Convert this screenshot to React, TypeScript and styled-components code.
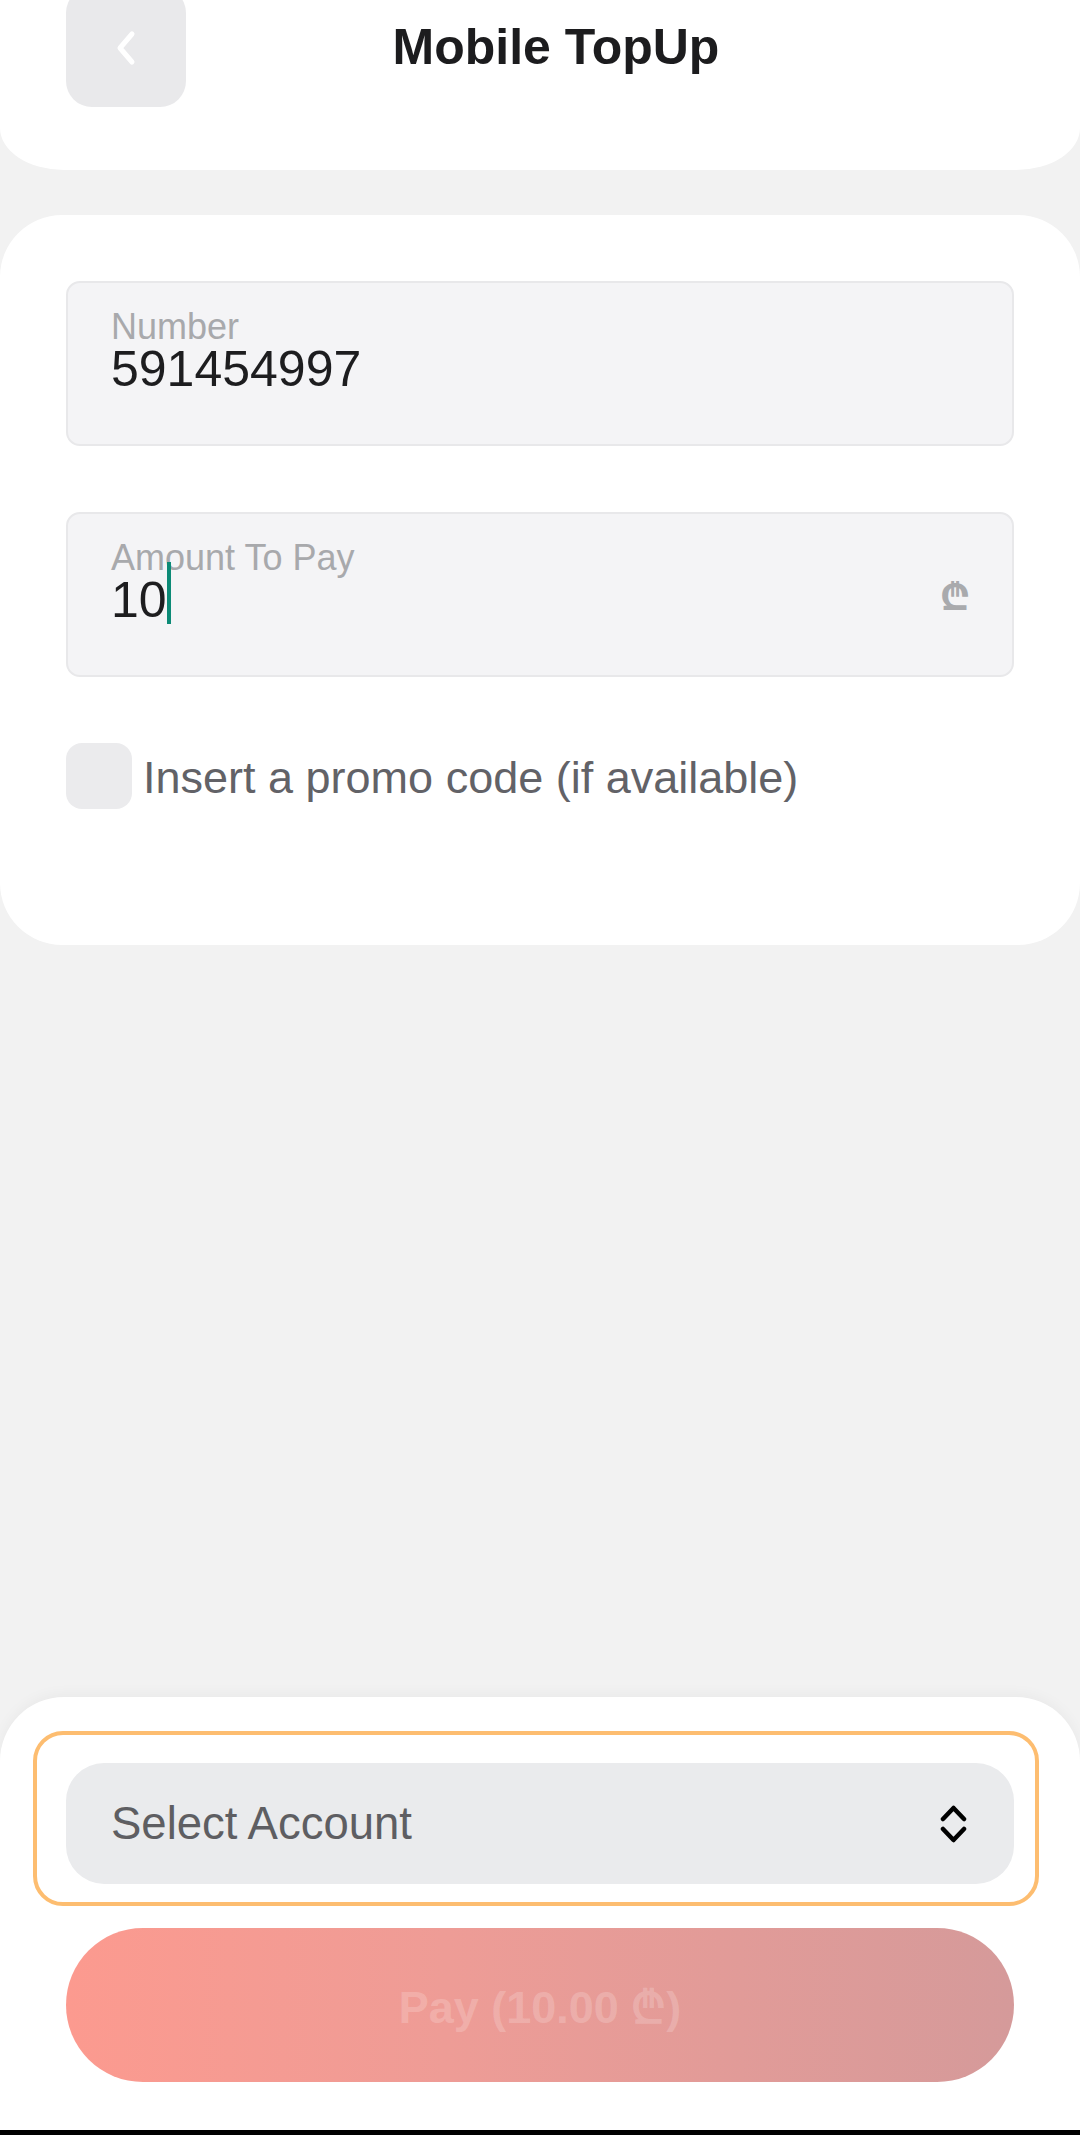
import React from "react";
import styled, { createGlobalStyle } from "styled-components";

const Global = createGlobalStyle`
  html, body {
    margin: 0;
    padding: 0;
    background: #f2f2f2;
    font-family: "Liberation Sans", Arial, sans-serif;
  }
  * { box-sizing: border-box; }
`;

const Page = styled.div`
  min-height: 100vh;
  display: flex;
  flex-direction: column;
  background: #f2f2f2;
`;

const Header = styled.header`
  height: 170px;
  background: #ffffff;
  border-radius: 0 0 64px 64px / 0 0 42px 42px;
  padding: 0 66px;
`;

const HeaderRow = styled.div`
  margin-top: -13px;
  height: 120px;
  display: grid;
  grid-template-columns: 120px 1fr 88px;
  align-items: center;
`;

const BackButton = styled.button`
  width: 120px;
  height: 120px;
  border: none;
  border-radius: 26px;
  background: #e9e9eb;
  display: flex;
  align-items: center;
  justify-content: center;
  padding: 0;
  padding-top: 2px;
`;

const Title = styled.h1`
  margin: 0;
  text-align: center;
  font-size: 50px;
  font-weight: 700;
  color: #1c1c1e;
`;

const Card = styled.section`
  margin-top: 45px;
  background: #ffffff;
  border-radius: 62px;
  padding: 66px 66px 136px;
  display: flex;
  flex-direction: column;
  gap: 66px;
`;

const Field = styled.div`
  position: relative;
  height: 165px;
  background: #f4f4f6;
  border: 2px solid #e8e8ea;
  border-radius: 14px;
  padding: 27px 42px 0 43px;
  display: flex;
  align-items: flex-start;
`;

const FieldBody = styled.div`
  flex: 1;
  display: flex;
  flex-direction: column;
`;

const Label = styled.span`
  font-size: 36px;
  line-height: 34px;
  height: 34px;
  color: #a8a9ac;
`;

const Value = styled.span`
  position: relative;
  font-size: 50px;
  line-height: 50px;
  color: #1d1d1f;
  display: flex;
  align-items: center;
`;

const Caret = styled.span`
  display: inline-block;
  width: 4px;
  height: 62px;
  background: #0c8a76;
  margin-top: -14px;
`;

const Currency = styled.span`
  align-self: center;
  margin-top: -27px;
  font-family: "DejaVu Sans", "Noto Sans", sans-serif;
  font-weight: 700;
  font-size: 38px;
  color: #a9aaad;
`;

const PromoRow = styled.label`
  display: flex;
  align-items: center;
  gap: 11px;
`;

const CheckBox = styled.span`
  width: 66px;
  height: 66px;
  border-radius: 16px;
  background: #ebebed;
  flex: none;
`;

const PromoText = styled.span`
  font-size: 45px;
  color: #626267;
  margin-top: 4px;
`;

const Spacer = styled.div`
  flex: 1;
`;

const Sheet = styled.footer`
  background: #ffffff;
  border-radius: 64px 64px 0 0;
  box-shadow: 0 -3px 14px rgba(0, 0, 0, 0.04);
  padding: 34px 41px 48px 33px;
  display: flex;
  flex-direction: column;
  gap: 22px;
`;

const Highlight = styled.div`
  border: 4px solid #fdbd70;
  border-radius: 30px;
  padding: 28px 21px 18px 29px;
`;

const Select = styled.div`
  height: 121px;
  border-radius: 38px;
  background: #eaebed;
  display: flex;
  align-items: center;
  justify-content: space-between;
  padding: 0 47px 0 45px;
`;

const SelectText = styled.span`
  font-size: 45.5px;
  color: #5e5e62;
`;

const PayButton = styled.button`
  margin: 0 25px 0 33px;
  height: 154px;
  border: none;
  border-radius: 77px;
  background: linear-gradient(90deg, #fc9a8f 0%, #ee9c96 40%, #d59a9a 100%);
  font-family: "Liberation Sans", Arial, "DejaVu Sans", sans-serif;
  font-weight: 700;
  font-size: 45px;
  color: rgba(255, 255, 255, 0.2);
`;

const NavBar = styled.div`
  height: 5px;
  background: #000000;
`;

export default function App() {
  return (
    <>
      <Global />
      <Page>
        <Header>
          <HeaderRow>
            <BackButton aria-label="Back">
              <svg width="26" height="40" viewBox="0 0 26 40">
                <polyline
                  points="19,6 7,20 19,34"
                  fill="none"
                  stroke="#ffffff"
                  strokeWidth="5"
                  strokeLinecap="round"
                  strokeLinejoin="round"
                />
              </svg>
            </BackButton>
            <Title>Mobile TopUp</Title>
            <span />
          </HeaderRow>
        </Header>

        <Card>
          <Field>
            <FieldBody>
              <Label>Number</Label>
              <Value>591454997</Value>
            </FieldBody>
          </Field>
          <Field>
            <FieldBody>
              <Label>Amount To Pay</Label>
              <Value>
                10
                <Caret />
              </Value>
            </FieldBody>
            <Currency>₾</Currency>
          </Field>
          <PromoRow>
            <CheckBox />
            <PromoText>Insert a promo code (if available)</PromoText>
          </PromoRow>
        </Card>

        <Spacer />

        <Sheet>
          <Highlight>
            <Select>
              <SelectText>Select Account</SelectText>
              <svg width="27" height="40" viewBox="0 0 27 40">
                <polyline
                  points="3,15 13.5,4 24,15"
                  fill="none"
                  stroke="#000000"
                  strokeWidth="4.5"
                  strokeLinecap="round"
                  strokeLinejoin="round"
                />
                <polyline
                  points="3,25 13.5,36 24,25"
                  fill="none"
                  stroke="#000000"
                  strokeWidth="4.5"
                  strokeLinecap="round"
                  strokeLinejoin="round"
                />
              </svg>
            </Select>
          </Highlight>
          <PayButton>Pay (10.00 ₾)</PayButton>
        </Sheet>
        <NavBar />
      </Page>
    </>
  );
}
